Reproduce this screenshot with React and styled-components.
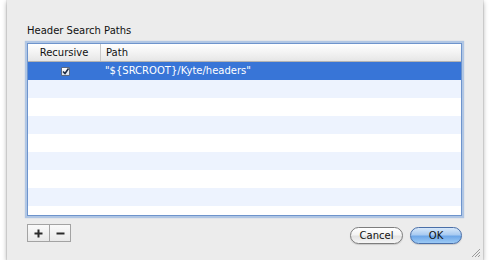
import React from 'react'
import styled, { createGlobalStyle } from 'styled-components'

const GlobalStyle = createGlobalStyle`
  html, body {
    margin: 0;
    background: #ffffff;
  }
  body {
    font-family: "DejaVu Sans", "Lucida Grande", sans-serif;
    font-size: 10px;
    color: #111;
  }
`

const Sheet = styled.div`
  position: relative;
  box-sizing: border-box;
  display: flex;
  flex-direction: column;
  width: 476px;
  height: 260px;
  margin-left: 7px;
  padding: 24px 21px 0 20px;
  background: #ececec;
  box-shadow: 0 2px 5px rgba(0, 0, 0, 0.35), 0 0 1px rgba(0, 0, 0, 0.4);
`

const Title = styled.div`
  height: 14px;
  line-height: 14px;
  margin-bottom: 5px;
`

const Table = styled.div`
  box-sizing: border-box;
  height: 173px;
  border: 1px solid #6e94cc;
  box-shadow: 0 0 1px 2px rgba(128, 168, 222, 0.55);
  background: #fff;
  overflow: hidden;
`

const HeaderRow = styled.div`
  display: grid;
  grid-template-columns: 73px 1fr;
  height: 17px;
  border-bottom: 1px solid #b3b3b3;
  background: linear-gradient(#ffffff, #f3f3f3 50%, #e6e6e6);
`

const HeaderCell = styled.div`
  line-height: 17px;
  padding-left: ${p => (p.$center ? 0 : '5px')};
  text-align: ${p => (p.$center ? 'center' : 'left')};
  border-right: ${p => (p.$divider ? '1px solid #c8c8c8' : 'none')};
`

const Row = styled.div`
  display: grid;
  grid-template-columns: 73px 1fr;
  height: 18px;
  line-height: 18px;
  color: ${p => (p.$selected ? '#fff' : '#111')};
  background: ${p => (p.$selected ? '#3875d7' : p.$odd ? '#edf3fe' : '#ffffff')};
`

const Cell = styled.div`
  display: flex;
  align-items: center;
  justify-content: ${p => (p.$center ? 'center' : 'flex-start')};
  padding-left: ${p => (p.$center ? '1px' : '4px')};
  white-space: nowrap;
`

const Check = styled.span`
  box-sizing: border-box;
  display: flex;
  align-items: center;
  justify-content: center;
  width: 9px;
  height: 9px;
  margin-top: 1px;
  border: 1px solid #5c6a80;
  border-radius: 1px;
  background: linear-gradient(#ffffff, #d9e2ee);
`

const Footer = styled.div`
  display: flex;
  justify-content: space-between;
  align-items: flex-start;
  margin-top: 8px;
`

const Segmented = styled.div`
  display: flex;
  height: 18px;
  border: 1px solid #a3a3a3;
  box-sizing: border-box;
  background: linear-gradient(#fafafa, #e9e9e9);
`

const SegButton = styled.div`
  display: flex;
  align-items: center;
  justify-content: center;
  width: ${p => p.$w}px;
  border-left: ${p => (p.$divider ? '1px solid #a3a3a3' : 'none')};
`

const Buttons = styled.div`
  display: flex;
  gap: 7px;
  margin-top: 3px;
`

const PushButton = styled.div`
  box-sizing: border-box;
  width: ${p => p.$w}px;
  height: 17px;
  line-height: 15px;
  text-align: center;
  border-radius: 9px;
  border: 1px solid ${p => (p.$primary ? '#4a6fa8' : '#7d7d7d')};
  background: ${p =>
    p.$primary
      ? 'linear-gradient(#d7e8fa, #a9cbf1 45%, #6ea7e8 55%, #9ccaf5)'
      : 'linear-gradient(#ffffff, #f4f4f4 45%, #e3e3e3 55%, #f6f6f6)'};
  box-shadow: 0 1px 1px rgba(0, 0, 0, 0.15);
`

const Grip = styled.svg`
  position: absolute;
  right: 2px;
  bottom: 2px;
`

const rows = Array.from({ length: 9 }, (_, i) => i)

function PlusIcon() {
  return (
    <svg width="9" height="9" viewBox="0 0 9 9">
      <path d="M4.5 0.5v8M0.5 4.5h8" stroke="#2a2a2a" strokeWidth="2" />
    </svg>
  )
}

function MinusIcon() {
  return (
    <svg width="9" height="9" viewBox="0 0 9 9">
      <path d="M0.5 4.5h8" stroke="#2a2a2a" strokeWidth="2" />
    </svg>
  )
}

export default function App() {
  return (
    <>
      <GlobalStyle />
      <Sheet>
        <Title>Header Search Paths</Title>
        <Table>
          <HeaderRow>
            <HeaderCell $center $divider>Recursive</HeaderCell>
            <HeaderCell>Path</HeaderCell>
          </HeaderRow>
          {rows.map(i => (
            <Row key={i} $selected={i === 0} $odd={i % 2 === 1}>
              <Cell $center>
                {i === 0 && (
                  <Check>
                    <svg width="7" height="7" viewBox="0 0 7 7">
                      <path d="M1 3.5l2 2L6.5 0.5" fill="none" stroke="#1b2a44" strokeWidth="1.6" />
                    </svg>
                  </Check>
                )}
              </Cell>
              <Cell>{i === 0 ? '"${SRCROOT}/Kyte/headers"' : ''}</Cell>
            </Row>
          ))}
        </Table>
        <Footer>
          <Segmented>
            <SegButton $w={21}><PlusIcon /></SegButton>
            <SegButton $w={20} $divider><MinusIcon /></SegButton>
          </Segmented>
          <Buttons>
            <PushButton $w={53}>Cancel</PushButton>
            <PushButton $w={52} $primary>OK</PushButton>
          </Buttons>
        </Footer>
        <Grip width="11" height="11" viewBox="0 0 11 11">
          <path d="M10 2L2 10M10 5L5 10M10 8L8 10" stroke="#9a9a9a" strokeWidth="1" />
        </Grip>
      </Sheet>
    </>
  )
}
